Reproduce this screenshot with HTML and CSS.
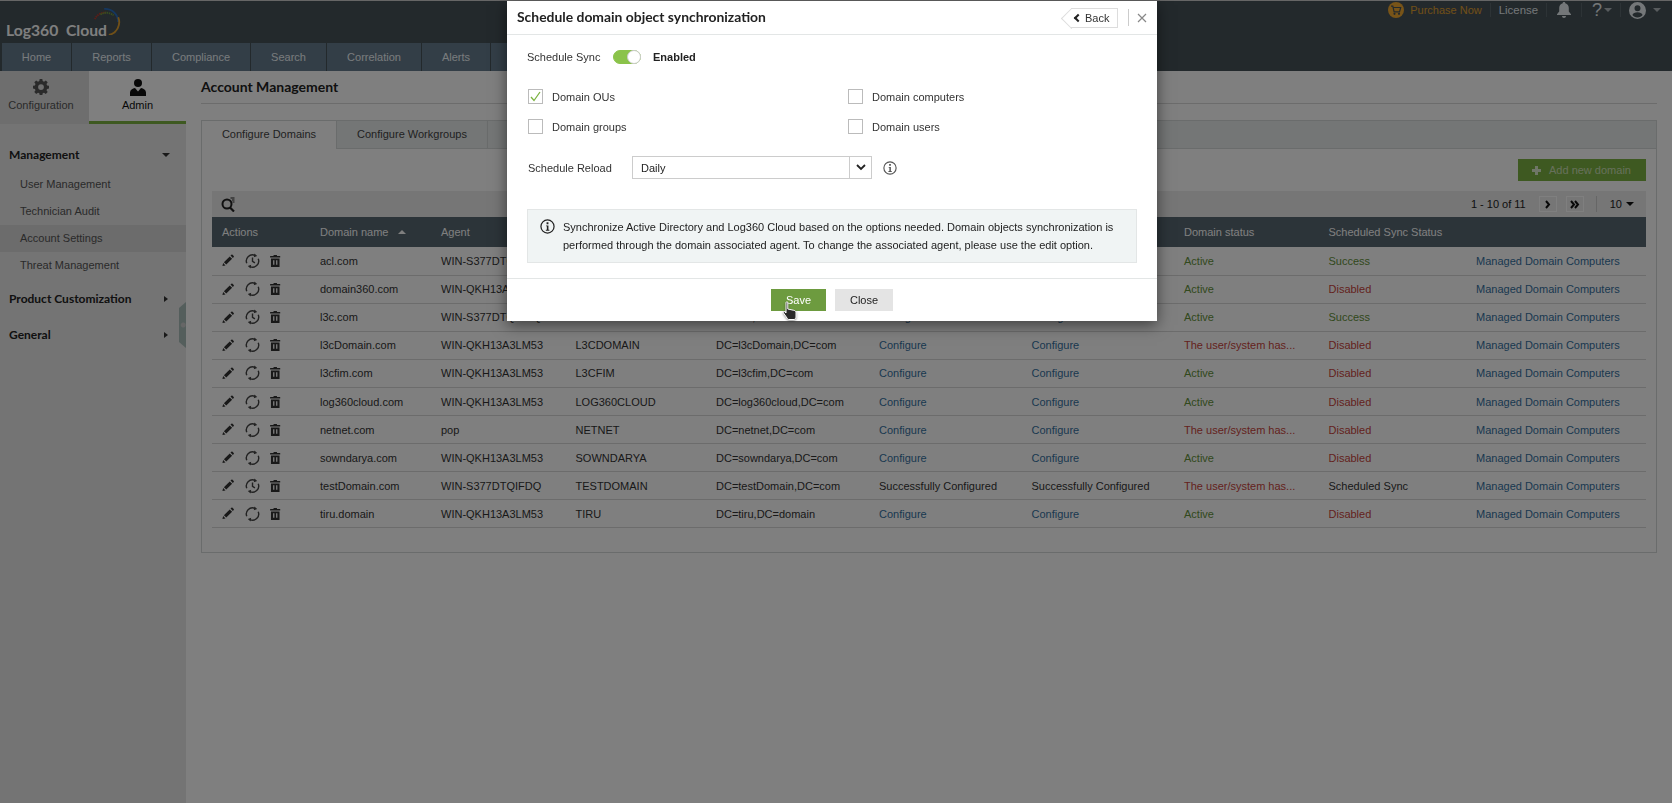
FILE: index.html
```html
<!DOCTYPE html>
<html>
<head>
    <meta charset="utf-8" />
    <title>Log360 Cloud - Account Management</title>
    <link rel="stylesheet" href="styles.css">
</head>
<body>
    <svg class="icon_defs" width="0" height="0">
        <symbol id="i_pencil" viewBox="0 0 14 14"><path d="M0.5 13.5l0.8-3.6 2.8 2.8zM2.2 9L9 2.2l2.8 2.8L5 11.8zM9.9 1.3l1.1-1c.4-.3.9-.3 1.2 0l1.5 1.5c.3.3.3.8 0 1.2l-1 1.1z"/></symbol>
        <symbol id="i_sync" viewBox="0 0 16 16"><path d="M3.300 3.400A6.600 6.600 0 0 1 10.700 2M12.700 12.600A6.600 6.600 0 0 1 5.300 14M1.900 10.500A6.600 6.600 0 0 1 3.300 3.400M14.100 5.500a6.600 6.600 0 0 1-1.400 7.100" fill="none" stroke="currentColor" stroke-width="1.500"/><path d="M10 0l3 2.600-3.600 1.400zM6 16l-3-2.600 3.600-1.400z"/></symbol>
        <symbol id="i_sync_clock" viewBox="0 0 16 16"><path d="M3.300 3.400A6.600 6.600 0 0 1 10.700 2M12.700 12.600A6.600 6.600 0 0 1 5.300 14M1.900 10.500A6.600 6.600 0 0 1 3.300 3.400M14.100 5.500a6.600 6.600 0 0 1-1.400 7.100M8 4.200V8.300l2.600 1.700" fill="none" stroke="currentColor" stroke-width="1.500"/><path d="M10 0l3 2.600-3.600 1.400zM6 16l-3-2.600 3.600-1.400z"/></symbol>
        <symbol id="i_trash" viewBox="0 0 12 14"><path fill-rule="evenodd" d="M4 0h4v1.300h4v1.700H0V1.300h4zM1 4h10v10H1zM3.500 6v5.500h1.500V6zM7 6v5.500h1.500V6z"/></symbol>
        <symbol id="i_info" viewBox="0 0 16 16"><circle cx="8" cy="8" r="7" fill="none" stroke="currentColor" stroke-width="1.300"/><path d="M7 3.500h2v2H7zM6.500 6.800H9v4.700h1v1H6.200v-1h1.100V7.800h-.8z"/></symbol>
    </svg>

    <div class="top_bar">
        <div class="logo">
            <span class="logo_text">Log360&nbsp; Cloud</span>
            <svg class="logo_arc" width="28" height="28" viewBox="0 0 30 30" fill="none">
                <path d="M2 13A12 12 0 0 1 14 6" stroke="#c0392b" stroke-width="2" stroke-dasharray="1.500 .8"/>
                <path d="M8 8A12 12 0 0 1 22 9" stroke="#6f9e3e" stroke-width="2" stroke-dasharray="1.500 .8"/>
                <path d="M12 2A14 14 0 0 1 27 16" stroke="#2a6fc0" stroke-width="2"/>
                <path d="M27 11A14 14 0 0 1 17 30" stroke="#e0a030" stroke-width="2"/>
            </svg>
        </div>
        <div class="top_links">
            <svg class="cart_icon" width="16" height="16" viewBox="0 0 16 16"><circle cx="8" cy="8" r="8" fill="#f0a830"/><path d="M3 4.200h1.800l1.300 5.600h5.400l1.200-4.300H5.200" fill="none" stroke="#465258" stroke-width="1.200"/><circle cx="6.500" cy="11.800" r="1.100" fill="#465258"/><circle cx="11" cy="11.800" r="1.100" fill="#465258"/></svg>
            <a class="purchase_link">Purchase Now</a>
            <span class="top_sep"></span>
            <a class="license_link">License</a>
            <span class="top_sep"></span>
            <svg class="bell_icon" width="14" height="16" viewBox="0 0 14 16"><path d="M7 0c.8 0 1.300.5 1.300 1.200C10.600 1.800 11.800 3.700 11.800 6v3.500L14 12.300V13H0v-.7l2.200-2.800V6c0-2.300 1.200-4.200 3.500-4.800C5.700.5 6.200 0 7 0zM5 14h4c0 1.100-.9 2-2 2s-2-.9-2-2z"/></svg>
            <span class="top_sep"></span>
            <span class="help_mark">?</span><span class="top_caret"></span>
            <span class="top_sep"></span>
            <svg class="user_icon" width="17" height="17" viewBox="0 0 16 16"><path fill-rule="evenodd" d="M8 0a8 8 0 1 1 0 16A8 8 0 0 1 8 0zM8 3a2.800 2.800 0 1 0 0 5.600A2.800 2.800 0 0 0 8 3zM3.200 12.200c1 1.400 2.800 2.300 4.800 2.300s3.800-.9 4.800-2.300C12.200 10.600 10.300 9.700 8 9.700s-4.200.9-4.800 2.500z"/></svg>
            <span class="top_caret user_caret"></span>
        </div>
    </div>
    <div class="nav_bar">
        <a class="nav_tab nav_home">Home</a>
        <a class="nav_tab nav_reports">Reports</a>
        <a class="nav_tab nav_compliance">Compliance</a>
        <a class="nav_tab nav_search">Search</a>
        <a class="nav_tab nav_correlation">Correlation</a>
        <a class="nav_tab nav_alerts">Alerts</a>
        <a class="nav_tab nav_more"></a>
    </div>

    <div class="main_wrap">
        <div class="side_bar">
            <div class="side_tabs">
                <a class="side_tab">
                    <svg width="16" height="16" viewBox="0 0 16 16"><path fill-rule="evenodd" d="M6.700 0h2.600l.4 2.100 1.300.6 1.800-1.200 1.900 1.800-1.200 1.800.6 1.400 2.100.4v2.600l-2.100.4-.6 1.300 1.200 1.800-1.900 1.900-1.800-1.200-1.300.5-.4 2.100H6.700l-.4-2.100-1.300-.5-1.800 1.200-1.900-1.900 1.200-1.800-.6-1.300L-.2 9.400V6.900l2.100-.4.600-1.400-1.200-1.800 1.900-1.800L5 2.700l1.300-.6zM8 5.200a2.900 2.900 0 1 0 0 5.800 2.900 2.900 0 0 0 0-5.800z"/></svg>
                    <span>Configuration</span>
                </a>
                <a class="side_tab side_tab_on">
                    <svg width="16" height="17" viewBox="0 0 16 17"><circle cx="8" cy="4" r="4"/><path d="M0 17v-3.500C0 11 2.500 9.500 5 9l3 3.500L11 9c2.500.5 5 2 5 4.500V17z"/></svg>
                    <span>Admin</span>
                </a>
            </div>
            <div class="side_menu">
                <div class="menu_head">Management<span class="caret_down"></span></div>
                <a class="menu_item">User Management</a>
                <a class="menu_item">Technician Audit</a>
                <a class="menu_item menu_item_on">Account Settings</a>
                <a class="menu_item">Threat Management</a>
                <div class="menu_head menu_head_next">Product Customization<span class="caret_right"></span></div>
                <div class="menu_head menu_head_next">General<span class="caret_right"></span></div>
            </div>
            <div class="side_handle"></div>
        </div>

        <div class="content">
            <h1 class="page_title">Account Management</h1>
            <div class="tab_panel">
                <div class="tab_row">
                    <a class="panel_tab panel_tab_on">Configure Domains</a>
                    <a class="panel_tab panel_tab_next">Configure Workgroups</a>
                </div>
                <div class="panel_body">
                    <div class="add_row">
                        <a class="add_btn"><span class="plus_mark"></span>Add new domain</a>
                    </div>
                    <div class="tool_row">
                        <svg class="search_icon" width="15" height="15" viewBox="0 0 15 15"><circle cx="6" cy="7" r="4.500" fill="none" stroke="currentColor" stroke-width="2"/><path d="M9 10.500l4 4" stroke="currentColor" stroke-width="2.200"/><path d="M9.500 1h4M11 3h2.500M11.500 5h2" stroke="currentColor" stroke-width="1"/></svg>
                        <span class="pager_text">1 - 10 of 11</span>
                        <a class="pager_btn"><svg width="8" height="9" viewBox="0 0 8 9"><path d="M2 1l3 3.500L2 8" fill="none" stroke="#111" stroke-width="2"/></svg></a>
                        <a class="pager_btn"><svg width="10" height="9" viewBox="0 0 10 9"><path d="M1 1l3 3.500L1 8M5 1l3 3.500L5 8" fill="none" stroke="#111" stroke-width="2"/></svg></a>
                        <span class="pager_sep"></span>
                        <span class="pager_size">10</span><span class="caret_down caret_dark"></span>
                    </div>
                    <table class="domain_table">
                        <colgroup>
                            <col class="col_actions"><col class="col_name"><col class="col_agent"><col class="col_netbios"><col class="col_dn"><col class="col_conf"><col class="col_conf2"><col class="col_state"><col class="col_sync"><col>
                        </colgroup>
                        <thead>
                            <tr><th>Actions</th><th>Domain name<span class="sort_mark"></span></th><th>Agent</th><th></th><th></th><th></th><th></th><th>Domain status</th><th>Scheduled Sync Status</th><th></th></tr>
                        </thead>
                        <tbody>
                            <tr>
                                <td class="act_cell"><svg class="act_pen"><use href="#i_pencil"/></svg><svg class="act_sync"><use href="#i_sync_clock"/></svg><svg class="act_trash"><use href="#i_trash"/></svg></td>
                                <td>acl.com</td><td>WIN-S377DTQIFDQ</td><td>ACL</td><td>DC=acl,DC=com</td><td class="link">Configure</td><td class="link">Configure</td><td class="ok">Active</td><td class="ok">Success</td><td class="link">Managed Domain Computers</td>
                            </tr>
                            <tr>
                                <td class="act_cell"><svg class="act_pen"><use href="#i_pencil"/></svg><svg class="act_sync"><use href="#i_sync"/></svg><svg class="act_trash"><use href="#i_trash"/></svg></td>
                                <td>domain360.com</td><td>WIN-QKH13A3LM53</td><td>DOMAIN360</td><td>DC=domain360,DC=com</td><td class="link">Configure</td><td class="link">Configure</td><td class="ok">Active</td><td class="bad">Disabled</td><td class="link">Managed Domain Computers</td>
                            </tr>
                            <tr>
                                <td class="act_cell"><svg class="act_pen"><use href="#i_pencil"/></svg><svg class="act_sync"><use href="#i_sync_clock"/></svg><svg class="act_trash"><use href="#i_trash"/></svg></td>
                                <td>l3c.com</td><td>WIN-S377DTQIFDQ</td><td>L3C</td><td>DC=l3c,DC=com</td><td class="link">Configure</td><td class="link">Configure</td><td class="ok">Active</td><td class="ok">Success</td><td class="link">Managed Domain Computers</td>
                            </tr>
                            <tr>
                                <td class="act_cell"><svg class="act_pen"><use href="#i_pencil"/></svg><svg class="act_sync"><use href="#i_sync"/></svg><svg class="act_trash"><use href="#i_trash"/></svg></td>
                                <td>l3cDomain.com</td><td>WIN-QKH13A3LM53</td><td>L3CDOMAIN</td><td>DC=l3cDomain,DC=com</td><td class="link">Configure</td><td class="link">Configure</td><td class="bad">The user/system has...</td><td class="bad">Disabled</td><td class="link">Managed Domain Computers</td>
                            </tr>
                            <tr>
                                <td class="act_cell"><svg class="act_pen"><use href="#i_pencil"/></svg><svg class="act_sync"><use href="#i_sync"/></svg><svg class="act_trash"><use href="#i_trash"/></svg></td>
                                <td>l3cfim.com</td><td>WIN-QKH13A3LM53</td><td>L3CFIM</td><td>DC=l3cfim,DC=com</td><td class="link">Configure</td><td class="link">Configure</td><td class="ok">Active</td><td class="bad">Disabled</td><td class="link">Managed Domain Computers</td>
                            </tr>
                            <tr>
                                <td class="act_cell"><svg class="act_pen"><use href="#i_pencil"/></svg><svg class="act_sync"><use href="#i_sync"/></svg><svg class="act_trash"><use href="#i_trash"/></svg></td>
                                <td>log360cloud.com</td><td>WIN-QKH13A3LM53</td><td>LOG360CLOUD</td><td>DC=log360cloud,DC=com</td><td class="link">Configure</td><td class="link">Configure</td><td class="ok">Active</td><td class="bad">Disabled</td><td class="link">Managed Domain Computers</td>
                            </tr>
                            <tr>
                                <td class="act_cell"><svg class="act_pen"><use href="#i_pencil"/></svg><svg class="act_sync"><use href="#i_sync"/></svg><svg class="act_trash"><use href="#i_trash"/></svg></td>
                                <td>netnet.com</td><td>pop</td><td>NETNET</td><td>DC=netnet,DC=com</td><td class="link">Configure</td><td class="link">Configure</td><td class="bad">The user/system has...</td><td class="bad">Disabled</td><td class="link">Managed Domain Computers</td>
                            </tr>
                            <tr>
                                <td class="act_cell"><svg class="act_pen"><use href="#i_pencil"/></svg><svg class="act_sync"><use href="#i_sync"/></svg><svg class="act_trash"><use href="#i_trash"/></svg></td>
                                <td>sowndarya.com</td><td>WIN-QKH13A3LM53</td><td>SOWNDARYA</td><td>DC=sowndarya,DC=com</td><td class="link">Configure</td><td class="link">Configure</td><td class="ok">Active</td><td class="bad">Disabled</td><td class="link">Managed Domain Computers</td>
                            </tr>
                            <tr>
                                <td class="act_cell"><svg class="act_pen"><use href="#i_pencil"/></svg><svg class="act_sync"><use href="#i_sync_clock"/></svg><svg class="act_trash"><use href="#i_trash"/></svg></td>
                                <td>testDomain.com</td><td>WIN-S377DTQIFDQ</td><td>TESTDOMAIN</td><td>DC=testDomain,DC=com</td><td>Successfully Configured</td><td>Successfully Configured</td><td class="bad">The user/system has...</td><td>Scheduled Sync</td><td class="link">Managed Domain Computers</td>
                            </tr>
                            <tr>
                                <td class="act_cell"><svg class="act_pen"><use href="#i_pencil"/></svg><svg class="act_sync"><use href="#i_sync"/></svg><svg class="act_trash"><use href="#i_trash"/></svg></td>
                                <td>tiru.domain</td><td>WIN-QKH13A3LM53</td><td>TIRU</td><td>DC=tiru,DC=domain</td><td class="link">Configure</td><td class="link">Configure</td><td class="ok">Active</td><td class="bad">Disabled</td><td class="link">Managed Domain Computers</td>
                            </tr>
                        </tbody>
                    </table>
                </div>
            </div>
        </div>
    </div>

    <div class="page_mask"></div>

    <div class="modal">
        <div class="modal_head">
            <h2 class="modal_title">Schedule domain object synchronization</h2>
            <a class="back_btn"><span class="back_chevron"></span>Back</a>
            <span class="head_sep"></span>
            <svg class="close_x" width="10" height="10" viewBox="0 0 10 10"><path d="M1 1l8 8M9 1l-8 8" stroke="#888" stroke-width="1.200"/></svg>
        </div>
        <div class="modal_body">
            <div class="sync_row">
                <span class="sync_label">Schedule Sync</span>
                <span class="toggle"><span class="toggle_knob"></span></span>
                <b class="sync_state">Enabled</b>
            </div>
            <div class="check_grid">
                <label class="check_item"><span class="check_box"><svg width="13" height="13" viewBox="0 0 13 13"><path d="M2 7l3 3.500L11 2" fill="none" stroke="#7cb342" stroke-width="1.300"/></svg></span>Domain OUs</label>
                <label class="check_item"><span class="check_box"></span>Domain computers</label>
                <label class="check_item"><span class="check_box"></span>Domain groups</label>
                <label class="check_item"><span class="check_box"></span>Domain users</label>
            </div>
            <div class="reload_row">
                <span class="reload_label">Schedule Reload</span>
                <div class="select_box">
                    <span class="select_value">Daily</span>
                    <span class="select_arrow"><svg width="10" height="7" viewBox="0 0 10 7"><path d="M1 1l4 4 4-4" fill="none" stroke="#222" stroke-width="1.800"/></svg></span>
                </div>
                <svg class="reload_info"><use href="#i_info"/></svg>
            </div>
            <div class="info_box">
                <svg class="info_icon"><use href="#i_info"/></svg>
                <p class="info_text">Synchronize Active Directory and Log360 Cloud based on the options needed. Domain objects synchronization is performed through the domain associated agent. To change the associated agent, please use the edit option.</p>
            </div>
        </div>
        <div class="modal_foot">
            <a class="btn_save">Save</a>
            <a class="btn_close">Close</a>
        </div>
    </div>

    <svg class="hand_cursor" width="17" height="20" viewBox="0 0 17 20"><path d="M4 1.500c0-.8 1.800-.8 1.800 0V8l6 1.300c1.500.4 2.200 1 2.200 2.500V16c0 1-1 2.500-2 2.500H7c-1 0-1.500-.6-2-1.500L1.500 12c-.6-1 .8-2 1.600-1L4 12z" fill="#2a2a2a" stroke="#fff" stroke-width="1"/></svg>
</body>
</html>
```

FILE: styles.css
```css
*
{
    margin: 0;
    padding: 0;
    box-sizing: border-box;
}

html, body
{
    height: 100%;
    overflow: hidden;
}

body
{
    font-family: "Liberation Sans", Arial, sans-serif;
    font-size: 11px;
    color: #444;
    background: #fff;
    border-top: 1px solid #ccc;
}

a
{
    display: inline-block;
}

.icon_defs
{
    display: block;
    height: 0;
}

/* top header */
.top_bar
{
    height: 42px;
    background: #465258;
    display: flex;
    justify-content: space-between;
    align-items: flex-start;
}

.logo
{
    display: flex;
    padding: 21px 0 0 6px;
}

.logo_text
{
    font-family: Lato, sans-serif;
    font-weight: bold;
    font-size: 15.700px;
    color: #fff;
    line-height: 16px;
}

.logo_arc
{
    margin: -15px 0 0 -14px;
}

.top_links
{
    display: flex;
    align-items: center;
    height: 18px;
    padding-right: 11px;
    color: #e8eef2;
}

.cart_icon
{
    margin-right: 6px;
}

.purchase_link
{
    color: #e0a030;
}

.license_link
{
    font-size: 11.400px;
}

.top_sep
{
    width: 1px;
    height: 14px;
    background: #5a666d;
    margin: 0 8px;
}

.bell_icon
{
    fill: #e8eef2;
    margin: 0 2px;
}

.help_mark
{
    font-size: 18px;
    width: 9px;
    margin-left: 2px;
}

.top_caret
{
    width: 0;
    height: 0;
    border: 4px solid transparent;
    border-top-color: #b0b8bd;
    border-bottom: 0;
    margin-left: 3px;
}

.user_icon
{
    fill: #e8eef2;
}

.user_caret
{
    margin-left: 7px;
}

/* nav */
.nav_bar
{
    height: 28px;
    background: #465258;
    display: flex;
    padding-left: 2px;
}

.nav_tab
{
    background: #667c8e;
    color: #f0f6fa;
    text-align: center;
    line-height: 29px;
    margin-right: 1px;
}

.nav_home { width: 69px; }
.nav_reports { width: 79px; }
.nav_compliance { width: 98px; }
.nav_search { width: 75px; }
.nav_correlation { width: 94px; }
.nav_alerts { width: 68px; }
.nav_more { width: 60px; }

/* sidebar */
.main_wrap
{
    display: flex;
    height: 732px;
}

.side_bar
{
    position: relative;
    width: 186px;
    flex: none;
    background: #e8e8e8;
}

.side_tabs
{
    display: flex;
    height: 53px;
}

.side_tab
{
    width: 89px;
    background: #dcdcdc;
    text-align: center;
    padding: 8px 7px 0 0;
    color: #555;
    fill: #555;
}

.side_tab svg
{
    display: block;
    margin: 0 auto 4px;
}

.side_tab_on
{
    width: 97px;
    background: #fff;
    color: #111;
    fill: #111;
    padding-right: 0;
    border-bottom: 3px solid #7cb342;
}

.side_tab_on svg
{
    margin-bottom: 3px;
}

.side_menu
{
    padding-top: 21px;
}

.menu_head
{
    position: relative;
    font-family: Lato, sans-serif;
    font-weight: bold;
    font-size: 12px;
    color: #222;
    padding-left: 9px;
    height: 20px;
    line-height: 20px;
    margin-bottom: 6px;
}

.menu_head_next
{
    margin: 10px 0 16px;
}

.caret_down
{
    display: inline-block;
    width: 0;
    height: 0;
    border: 4px solid transparent;
    border-top-color: #333;
    border-bottom: 0;
    position: absolute;
    left: 162px;
    top: 8px;
}

.caret_right
{
    width: 0;
    height: 0;
    border: 3.500px solid transparent;
    border-left: 4px solid #333;
    border-right: 0;
    position: absolute;
    left: 164px;
    top: 7px;
}

.menu_item
{
    display: block;
    height: 27px;
    line-height: 27px;
    padding-left: 20px;
    color: #555;
}

.menu_item_on
{
    background: #d8d8d8;
}

.side_handle
{
    position: absolute;
    right: 0;
    top: 231px;
    width: 7px;
    height: 46px;
    background: radial-gradient(circle at 60% 50%, #ccc 0, #ccc 2px, #a8bcb8 3px);
    clip-path: polygon(100% 0, 100% 100%, 0 87%, 0 13%);
}

/* content */
.content
{
    flex: 1;
    padding: 0 15px 0 15px;
}

.page_title
{
    font-family: Lato, sans-serif;
    font-weight: bold;
    font-size: 14px;
    color: #222;
    height: 33px;
    line-height: 31px;
    border-bottom: 1px solid #d8d8d8;
}

.tab_panel
{
    margin-top: 16px;
    height: 433px;
    border: 1px solid #d4d8d8;
}

.tab_row
{
    display: flex;
    height: 28px;
    background: #e8eded;
    border-bottom: 1px solid #d4d8d8;
}

.panel_tab
{
    height: 28px;
    line-height: 26px;
    text-align: center;
    color: #444;
    border-right: 1px solid #d4d8d8;
}

.panel_tab_on
{
    width: 135px;
    background: #fff;
}

.panel_tab_next
{
    width: 151px;
}

.panel_body
{
    padding: 10px 10px 0;
}

.add_row
{
    display: flex;
    justify-content: flex-end;
}

.add_btn
{
    width: 128px;
    height: 22px;
    line-height: 22px;
    background: #7cb342;
    color: #cfe0b8;
    padding-left: 14px;
    display: flex;
    align-items: center;
}

.plus_mark
{
    width: 9px;
    height: 9px;
    margin-right: 8px;
    background:
        linear-gradient(#fff, #fff) center / 9px 3px no-repeat,
        linear-gradient(#fff, #fff) center / 3px 9px no-repeat;
    opacity: 0.75;
}

.tool_row
{
    display: flex;
    align-items: center;
    height: 26px;
    margin-top: 10px;
    background: #ececec;
    color: #222;
    padding: 0 12px 0 9px;
}

.search_icon
{
    margin-right: auto;
}

.pager_text
{
    margin-right: 13px;
}

.pager_btn
{
    display: flex;
    align-items: center;
    justify-content: center;
    width: 18px;
    height: 16px;
    border: 1px solid #fff;
    margin-right: 9px;
}

.pager_sep
{
    width: 1px;
    height: 16px;
    background: #ccc;
    margin: 0 13px 0 3px;
}

.caret_dark
{
    position: static;
    margin-left: 4px;
    border-top-color: #111;
}

/* table */
.domain_table
{
    width: 1434px;
    table-layout: fixed;
    border-collapse: collapse;
}

.col_actions { width: 98px; }
.col_name { width: 121px; }
.col_agent { width: 134.500px; }
.col_netbios { width: 140.500px; }
.col_dn { width: 163px; }
.col_conf { width: 152.500px; }
.col_conf2 { width: 152.500px; }
.col_state { width: 144.500px; }
.col_sync { width: 147.500px; }

.domain_table th
{
    height: 30px;
    background: #586872;
    color: #fff;
    font-weight: normal;
    text-align: left;
    padding-left: 10px;
    white-space: nowrap;
}

.domain_table td
{
    height: 28.100px;
    padding-left: 10px;
    border-bottom: 1px solid #d8d8d8;
    white-space: nowrap;
    overflow: hidden;
    color: #333;
}

.sort_mark
{
    display: inline-block;
    width: 0;
    height: 0;
    border: 4px solid transparent;
    border-bottom: 4px solid #fff;
    border-top: 0;
    margin-left: 10px;
    vertical-align: 2px;
}

.domain_table td.link
{
    color: #35719f;
}

.domain_table td.ok
{
    color: #64923a;
}

.domain_table td.bad
{
    color: #c8443c;
}

.act_cell svg
{
    vertical-align: middle;
    fill: #333;
    color: #333;
}

.act_pen
{
    width: 12px;
    height: 13px;
    margin-right: 11px;
}

.act_cell .act_sync
{
    width: 15px;
    height: 16px;
    margin-right: 10px;
    fill: #444;
    color: #444;
}

.act_trash
{
    width: 10.500px;
    height: 12px;
}

/* modal over the page */
.page_mask
{
    position: fixed;
    top: 0;
    left: 0;
    right: 0;
    bottom: 0;
    background: rgba(0, 0, 0, 0.5);
}

.modal
{
    position: absolute;
    left: 507px;
    top: 1px;
    width: 650px;
    height: 320px;
    background: #fff;
    box-shadow: 0 4px 14px rgba(0, 0, 0, 0.5);
    color: #333;
}

.modal_head
{
    position: relative;
    display: flex;
    align-items: center;
    height: 34px;
    border-bottom: 1px solid #e3e6e6;
    padding: 0 9px 0 10px;
}

.modal_title
{
    font-family: Lato, sans-serif;
    font-size: 13.900px;
    font-weight: bold;
    color: #222;
    margin-right: auto;
    padding-bottom: 3px;
}

.back_btn
{
    position: relative;
    width: 47px;
    height: 20px;
    line-height: 18px;
    border: 1px solid #ddd;
    border-left: 0;
    padding-left: 14px;
    margin-right: 10px;
    color: #333;
}

.back_btn:before
{
    content: "";
    position: absolute;
    left: -7px;
    top: 2px;
    width: 14px;
    height: 14px;
    border-left: 1px solid #ddd;
    border-bottom: 1px solid #ddd;
    transform: rotate(45deg);
}

.back_chevron
{
    position: absolute;
    left: 4px;
    top: 6px;
    width: 6px;
    height: 6px;
    border-left: 2px solid #222;
    border-bottom: 2px solid #222;
    transform: rotate(45deg);
}

.head_sep
{
    width: 1px;
    height: 17px;
    background: #ccc;
    margin-right: 8px;
}

.close_x
{
    margin-right: 1px;
}

.modal_body
{
    padding: 0 20px 0 20px;
}

.sync_row
{
    display: flex;
    align-items: center;
    height: 14px;
    margin-top: 15px;
}

.sync_label
{
    width: 86px;
}

.toggle
{
    position: relative;
    width: 28px;
    height: 14px;
    border-radius: 7px;
    background: #8bc34a;
    border: 1px solid #8bc34a;
}

.toggle_knob
{
    position: absolute;
    right: -1px;
    top: -1px;
    width: 14px;
    height: 14px;
    border-radius: 50%;
    background: #fff;
    border: 1px solid #ccc;
}

.sync_state
{
    margin-left: 12px;
    color: #222;
}

.check_grid
{
    display: grid;
    grid-template-columns: 320px 1fr;
    row-gap: 15px;
    margin-top: 25px;
}

.check_item
{
    display: flex;
    align-items: center;
    height: 15px;
    padding-left: 1px;
}

.check_box
{
    width: 15px;
    height: 15px;
    border: 1px solid #bbb;
    margin-right: 9px;
}

.check_box svg
{
    display: block;
}

.reload_row
{
    display: flex;
    align-items: center;
    height: 23px;
    margin-top: 22px;
}

.reload_label
{
    width: 105px;
    padding-left: 1px;
}

.select_box
{
    display: flex;
    width: 240px;
    height: 23px;
    border: 1px solid #ccc;
}

.select_value
{
    flex: 1;
    padding-left: 8px;
    line-height: 23px;
    color: #222;
}

.select_arrow
{
    width: 22px;
    border-left: 1px solid #ccc;
    display: flex;
    align-items: center;
    justify-content: center;
}

.reload_info
{
    width: 14px;
    height: 14px;
    margin-left: 11px;
    fill: #555;
    color: #555;
}

.info_box
{
    display: flex;
    height: 54px;
    margin-top: 30px;
    background: #f0f4f4;
    border: 1px solid #e3e6e6;
    padding: 8px 12px;
}

.info_icon
{
    flex: none;
    width: 15px;
    height: 15px;
    margin: 1px 8px 0 0;
    fill: #222;
    color: #222;
}

.info_text
{
    line-height: 18px;
    color: #222;
    flex: 1;
}

.modal_foot
{
    display: flex;
    justify-content: center;
    gap: 9px;
    margin-top: 15px;
    padding-top: 10px;
    border-top: 1px solid #e3e6e6;
}

.btn_save, .btn_close
{
    height: 22px;
    line-height: 22px;
    text-align: center;
}

.btn_save
{
    width: 55px;
    background: #6d9b3f;
    color: #fff;
}

.btn_close
{
    width: 58px;
    background: #e4e4e4;
    color: #222;
}

.hand_cursor
{
    position: absolute;
    left: 782px;
    top: 301px;
    filter: drop-shadow(0 1px 1px rgba(0, 0, 0, 0.4));
}
```
